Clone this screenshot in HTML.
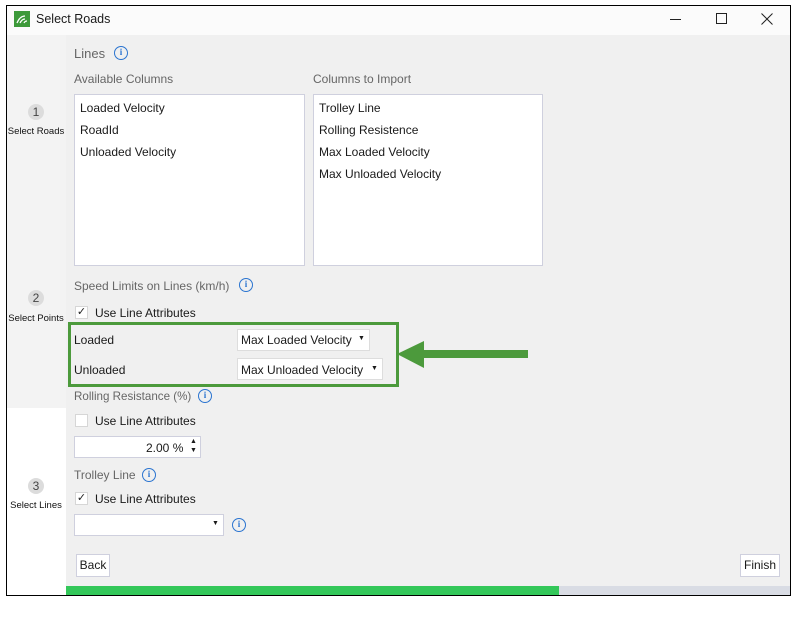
<!DOCTYPE html>
<html><head><style>
*{margin:0;padding:0;box-sizing:border-box}
body{width:797px;height:617px;background:#fff;font-family:"Liberation Sans",sans-serif;font-size:12px;color:#1a1a1a;position:relative;overflow:hidden}
.a{position:absolute;white-space:nowrap}
.lbl{color:#666}
.box{position:absolute;background:#fff;border:1px solid #cfd0de}
.info{position:absolute;width:14px;height:14px;border:1.5px solid #2a74d0;border-radius:50%;color:#2a74d0;font:bold 9px "Liberation Serif",serif;text-align:center;line-height:11px}
.cb{position:absolute;width:13px;height:13px;background:#fff;border:1px solid #d6d6d6;font-size:11px;line-height:11px;text-align:center;color:#222}
.step{position:absolute;width:16px;height:16px;border-radius:50%;background:#dcdcdc;text-align:center;line-height:16px;font-size:12px;color:#444}
.sl{position:absolute;font-size:9.5px;color:#111;width:60px;text-align:center}
.btn{position:absolute;background:#fff;border:1px solid #cfd0de;text-align:center;line-height:20px}
.dd{position:absolute;font-size:7px}
</style></head><body>
<div class="a" style="left:6px;top:5px;width:785px;height:591px;border:1px solid #000;background:#f0f0f0"></div>
<div class="a" style="left:7px;top:6px;width:783px;height:29px;background:#fbfbfb"></div>
<div class="a" style="left:14px;top:11px;width:16px;height:16px;background:#3d9a3a"></div>
<svg class="a" style="left:14px;top:11px" width="16" height="16"><path d="M3 12 Q6 5 11 5 M6 12 Q8 8 11 8 M10 12 Q11 10 13 10" stroke="#fff" stroke-width="1.3" fill="none"/></svg>
<div class="a" style="left:36px;top:12px;font-size:12.5px">Select Roads</div>
<div class="a" style="left:670px;top:19px;width:11px;height:1px;background:#222"></div>
<div class="a" style="left:716px;top:13px;width:11px;height:11px;border:1px solid #222"></div>
<svg class="a" style="left:761px;top:13px" width="12" height="12"><path d="M0.5 0.5L11.5 11.5M11.5 0.5L0.5 11.5" stroke="#222" stroke-width="1"/></svg>
<div class="a" style="left:7px;top:35px;width:59px;height:373px;background:#f3f3f3"></div>
<div class="a" style="left:7px;top:408px;width:59px;height:187px;background:#fff"></div>
<div class="step" style="left:28px;top:104px">1</div><div class="sl" style="left:6px;top:126px">Select Roads</div>
<div class="step" style="left:28px;top:290px">2</div><div class="sl" style="left:6px;top:313px">Select Points</div>
<div class="step" style="left:28px;top:478px">3</div><div class="sl" style="left:6px;top:500px">Select Lines</div>

<div class="a lbl" style="left:74px;top:46px;font-size:13px">Lines</div><div class="info" style="left:114px;top:46px">i</div>
<div class="a lbl" style="left:74px;top:72px">Available Columns</div>
<div class="a lbl" style="left:313px;top:72px">Columns to Import</div>
<div class="box" style="left:74px;top:94px;width:231px;height:172px"></div>
<div class="a" style="left:80px;top:101px">Loaded Velocity</div>
<div class="a" style="left:80px;top:123px">RoadId</div>
<div class="a" style="left:80px;top:145px">Unloaded Velocity</div>
<div class="box" style="left:313px;top:94px;width:230px;height:172px"></div>
<div class="a" style="left:319px;top:101px">Trolley Line</div>
<div class="a" style="left:319px;top:123px">Rolling Resistence</div>
<div class="a" style="left:319px;top:145px">Max Loaded Velocity</div>
<div class="a" style="left:319px;top:167px">Max Unloaded Velocity</div>

<div class="a lbl" style="left:74px;top:279px">Speed Limits on Lines (km/h)</div><div class="info" style="left:239px;top:278px">i</div>
<div class="cb" style="left:75px;top:306px">✓</div><div class="a" style="left:95px;top:306px">Use Line Attributes</div>
<div class="a" style="left:68px;top:322px;width:331px;height:65px;border:3px solid #4c9a3c"></div>
<div class="a" style="left:74px;top:333px">Loaded</div>
<div class="box" style="left:237px;top:329px;width:133px;height:22px;border-color:#ddd"></div>
<div class="a" style="left:241px;top:333px">Max Loaded Velocity</div><div class="dd" style="left:358px;top:335px">▼</div>
<div class="a" style="left:74px;top:363px">Unloaded</div>
<div class="box" style="left:237px;top:358px;width:146px;height:22px;border-color:#ddd"></div>
<div class="a" style="left:241px;top:363px">Max Unloaded Velocity</div><div class="dd" style="left:371px;top:365px">▼</div>
<svg class="a" style="left:396px;top:340px" width="134" height="30"><path d="M1 14 L28 1 L28 10 L132 10 L132 18 L28 18 L28 28 Z" fill="#4c9a3c"/></svg>

<div class="a lbl" style="left:74px;top:390px;font-size:11.6px">Rolling Resistance (%)</div><div class="info" style="left:198px;top:389px">i</div>
<div class="cb" style="left:75px;top:414px"></div><div class="a" style="left:95px;top:414px">Use Line Attributes</div>
<div class="box" style="left:74px;top:436px;width:127px;height:22px"></div>
<div class="a" style="left:146px;top:441px">2.00 %</div>
<div class="a" style="left:190px;top:437px;font-size:7px;line-height:9px">▲<br>▼</div>
<div class="a lbl" style="left:74px;top:468px">Trolley Line</div><div class="info" style="left:142px;top:468px">i</div>
<div class="cb" style="left:75px;top:492px">✓</div><div class="a" style="left:95px;top:492px">Use Line Attributes</div>
<div class="box" style="left:74px;top:514px;width:150px;height:22px"></div>
<div class="dd" style="left:212px;top:520px">▼</div>
<div class="info" style="left:232px;top:518px">i</div>

<div class="btn" style="left:76px;top:554px;width:34px;height:23px">Back</div>
<div class="btn" style="left:740px;top:554px;width:40px;height:23px">Finish</div>
<div class="a" style="left:66px;top:586px;width:493px;height:9px;background:#33c759"></div>
<div class="a" style="left:559px;top:586px;width:231px;height:9px;background:#d9dce4"></div>
</body></html>
